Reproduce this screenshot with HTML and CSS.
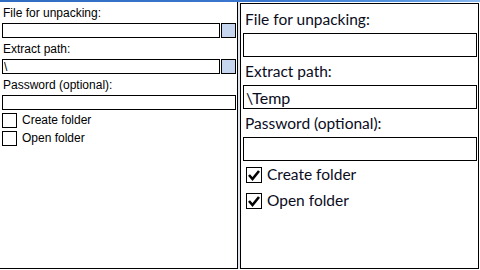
FILE: index.html
```html
<!DOCTYPE html>
<html lang="en">
<head>
    <meta charset="UTF-8" />
    <title>Extract archive</title>
    <link rel="stylesheet" href="styles.css">
</head>
<body>
    <div class="strip"></div>
    <div class="panes">
        <div class="pane small">
            <div class="label">File for unpacking:</div>
            <div class="row">
                <input class="field" type="text" value="" />
                <span class="browse"></span>
            </div>
            <div class="label">Extract path:</div>
            <div class="row">
                <input class="field" type="text" value="\" />
                <span class="browse"></span>
            </div>
            <div class="label">Password (optional):</div>
            <div class="row">
                <input class="field" type="password" value="" />
            </div>
            <div class="checks">
                <label class="check"><span class="box"></span><span>Create folder</span></label>
                <label class="check"><span class="box"></span><span>Open folder</span></label>
            </div>
        </div>

        <div class="divider"></div>

        <div class="pane large">
            <div class="label">File for unpacking:</div>
            <input class="field" type="text" value="" />
            <div class="label">Extract path:</div>
            <input class="field" type="text" value="\Temp" />
            <div class="label">Password (optional):</div>
            <input class="field" type="password" value="" />
            <div class="checks">
                <label class="check">
                    <span class="box"><svg width="14" height="14" viewBox="0 0 14 14"><path d="M2 7 L5.5 11 L12 3" fill="none" stroke="#000" stroke-width="2.6"/></svg></span>
                    <span>Create folder</span>
                </label>
                <label class="check">
                    <span class="box"><svg width="14" height="14" viewBox="0 0 14 14"><path d="M2 7 L5.5 11 L12 3" fill="none" stroke="#000" stroke-width="2.6"/></svg></span>
                    <span>Open folder</span>
                </label>
            </div>
        </div>
    </div>
</body>
</html>
```

FILE: styles.css
```css
body { margin: 0; width: 480px; height: 270px; overflow: hidden; background: #fff; color: #000; }
.strip { height: 2px; background: linear-gradient(to right, #2f6cc2 0%, #3a78cf 55%, #5b98e2 85%, #8dbcf0 100%); }
.panes { display: flex; height: 267px; }
.divider { width: 2px; background: #e4e6ee; }

.pane { box-sizing: border-box; display: flex; flex-direction: column; }
.field { box-sizing: border-box; border: 1px solid #000; border-radius: 0; background: #fff; outline: none; margin: 0; }

/* left: small screen */
.small { width: 238px; height: 267px; padding: 0 1px 0 2px; border-right: 1px solid #000; border-bottom: 1px solid #000;
    font-family: "Liberation Sans", Arial, sans-serif; font-size: 12px; }
.small .label { padding: 4px 0 3px 1px; line-height: 14px; }
.small .row { display: flex; gap: 1px; height: 15px; }
.small .field { flex: 1; height: 15px; padding: 0 1px; font: 12px "Liberation Sans", Arial, sans-serif; }
.small .browse { width: 15px; height: 15px; box-sizing: border-box; border: 1px solid #000; background: #c6d6ee; }
.small .checks { margin-top: 3px; }
.small .check { display: flex; align-items: flex-start; height: 18px; line-height: 15px; }
.small .box { width: 15px; height: 15px; box-sizing: border-box; border: 1px solid #000; margin-right: 5px; }

/* right: large screen */
.large { width: 239px; height: 266px; margin-top: 1px; padding: 1px 1px 0 2px; border: 1px solid #000;
    font-family: Lato, "Liberation Sans", sans-serif; font-size: 15.5px; color: #0a0c1c; }
.large .label { padding: 4px 0 4px 2px; line-height: 20px; }
.large .field { width: 100%; height: 24px; padding: 0 2px; font: 16px Lato, "Liberation Sans", sans-serif; color: #0a0c1c; }
.large .checks { margin-top: 6px; padding-left: 3px; }
.large .check { display: flex; align-items: flex-start; height: 26px; line-height: 14px; }
.large .box { width: 16px; height: 16px; box-sizing: border-box; border: 1px solid #000; margin-right: 5px; }
.large .box svg { display: block; }
```
